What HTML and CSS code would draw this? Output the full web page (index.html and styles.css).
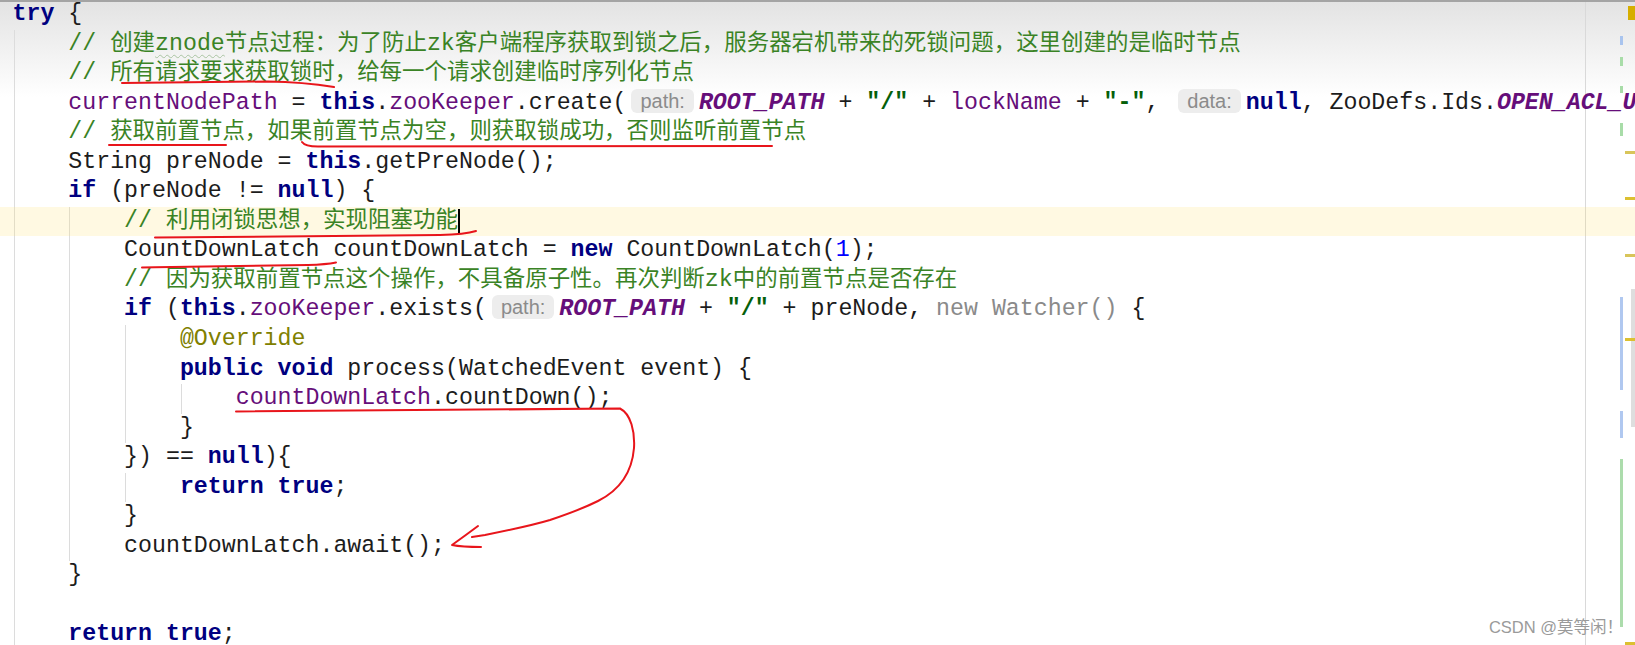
FILE: index.html
```html
<!DOCTYPE html>
<html lang="zh-CN">
<head>
    <meta charset="UTF-8">
    <title>ZkLock.tryLock</title>
    <link rel="stylesheet" href="styles.css">
</head>
<body>

<div class="editor">
    <div class="code">
        <div class="line"><span class="kw">try</span> {</div>
        <div class="block">
            <div class="line"><span class="cm"><span class="lat">// </span>创建<span class="lat typo">znode</span>节点过程：为了防止<span class="lat">zk</span>客户端程序获取到锁之后，服务器宕机带来的死锁问题，这里创建的是临时节点</span></div>
            <div class="line"><span class="cm"><span class="lat">// </span>所有请求要求获取锁时，给每一个请求创建临时序列化节点</span></div>
            <div class="line"><span class="fd">currentNodePath</span> = <span class="kw">this</span>.<span class="fd">zooKeeper</span>.create(<span class="hint">path:</span><span class="cst">ROOT_PATH</span> + <span class="str">"/"</span> + <span class="fd">lockName</span> + <span class="str">"-"</span>, <span class="hint">data:</span><span class="kw">null</span>, ZooDefs.Ids.<span class="cst">OPEN_ACL_UNSAFE</span>, CreateMode.<span class="cst">EPHEMERAL_SEQUENTIAL</span>);</div>
            <div class="line"><span class="cm"><span class="lat">// </span>获取前置节点，如果前置节点为空，则获取锁成功，否则监听前置节点</span></div>
            <div class="line">String preNode = <span class="kw">this</span>.getPreNode();</div>
            <div class="line"><span class="kw">if</span> (preNode != <span class="kw">null</span>) {</div>
            <div class="block">
                <div class="line current"><span class="cm"><span class="lat">// </span>利用闭锁思想，实现阻塞功能</span><span class="caret"></span></div>
                <div class="line">CountDownLatch countDownLatch = <span class="kw">new</span> CountDownLatch(<span class="num">1</span>);</div>
                <div class="line"><span class="cm"><span class="lat">// </span>因为获取前置节点这个操作，不具备原子性。再次判断<span class="lat">zk</span>中的前置节点是否存在</span></div>
                <div class="line"><span class="kw">if</span> (<span class="kw">this</span>.<span class="fd">zooKeeper</span>.exists(<span class="hint">path:</span><span class="cst">ROOT_PATH</span> + <span class="str">"/"</span> + preNode, <span class="dim">new Watcher()</span> {</div>
                <div class="block">
                    <div class="line"><span class="ann">@Override</span></div>
                    <div class="line"><span class="kw">public void</span> process(WatchedEvent event) {</div>
                    <div class="block">
                        <div class="line"><span class="fd">countDownLatch</span>.countDown();</div>
                    </div>
                    <div class="line">}</div>
                </div>
                <div class="line">}) == <span class="kw">null</span>){</div>
                <div class="block">
                    <div class="line"><span class="kw">return true</span>;</div>
                </div>
                <div class="line">}</div>
                <div class="line">countDownLatch.await();</div>
            </div>
            <div class="line">}</div>
            <div class="line"></div>
            <div class="line"><span class="kw">return true</span>;</div>
        </div>
    </div>
    <div class="stripe">
        <svg width="15" height="643" viewBox="0 0 15 643">
            <rect x="8" y="4" width="7" height="14" fill="#d6ae00"/>
            <rect x="0" y="34" width="3" height="9" fill="#a9c4ee"/>
            <rect x="0" y="55" width="3" height="9" fill="#a8dca8"/>
            <rect x="0" y="84" width="3" height="7" fill="#a8dca8"/>
            <rect x="0" y="121" width="3" height="13" fill="#a8dca8"/>
            <rect x="11" y="287" width="4" height="138" fill="#dedede"/>
            <rect x="5" y="149" width="10" height="3" fill="#d8c55a"/>
            <rect x="5" y="195" width="10" height="3" fill="#dcc030"/>
            <rect x="5" y="252" width="10" height="3" fill="#d8c55a"/>
            <rect x="5" y="336" width="10" height="3" fill="#dcc030"/>
            <rect x="5" y="640" width="10" height="3" fill="#dcc030"/>
            <rect x="0" y="295" width="3" height="93" fill="#b0c8f0"/>
            <rect x="0" y="409" width="3" height="27" fill="#b0c8f0"/>
            <rect x="0" y="457" width="3" height="168" fill="#acdcac"/>
        </svg>
    </div>
</div>

<!-- hand-drawn red marks on top of the screenshot -->
<svg class="ink" width="1635" height="645" viewBox="0 0 1635 645">
    <g fill="none" stroke="#e8151b" stroke-width="2" stroke-linecap="round" stroke-linejoin="round">
        <path d="M122 83 L268 81.5 Q303 82 334 87"/>
        <path d="M109 145 L226 145"/>
        <path d="M302 142 Q305 146.5 318 146.5 L772 146"/>
        <path d="M155 237.5 C260 236.5 380 236 440 235 Q465 234.5 476 231"/>
        <path d="M142 267.5 C205 266.5 270 265.5 308 265 Q326 264.5 336 262.5"/>
        <path d="M236 411.5 L620 408.5 C631 414 635 432 634 448 C632 472 620 490 598 501 C580 510 562 516 550 520 C530 526 505 531 485 535 L472 537"/>
        <path d="M478 526 C470 532 459 540 452 545 C462 547 472 547 481 547"/>
    </g>
</svg>

<div class="watermark">CSDN @莫等闲！</div>

</body>
</html>
```

FILE: styles.css
```css
html, body {
    margin: 0;
}
body {
    position: relative;
    width: 1635px;
    height: 645px;
    overflow: hidden;
    background: #fff;
}
.editor {
    display: flex;
    height: 643px;
    border-top: 2px solid #a4a4a4;
    background:
        linear-gradient(to right, transparent 1585px, #d9d9d9 1585px, #d9d9d9 1586px, transparent 1586px),
        linear-gradient(#e3e3e3, #fff 95px);
    overflow: hidden;
}
.code {
    flex: 1;
    min-width: 0;
    margin-top: -2px;
    padding-left: 12.5px;
    font-family: "Liberation Mono", "Noto Sans CJK SC", monospace;
    font-size: 23.25px;
    color: #1c1c1c;
}
.line {
    height: 29.55px;
    line-height: 29.55px;
    white-space: pre;
}
.block {
    margin-left: 1px;
    border-left: 1px solid #dcdcdc;
    padding-left: calc(4ch - 2px);
}
.current {
    background: rgba(255, 226, 110, 0.2);
    box-shadow: -1200px 0 0 rgba(255, 226, 110, 0.2), 1200px 0 0 rgba(255, 226, 110, 0.2);
}
.caret {
    display: inline-block;
    width: 2px;
    height: 24px;
    background: #000;
    vertical-align: middle;
}
.kw {
    color: #000080;
    font-weight: bold;
}
.fd {
    color: #660e7a;
}
.cst {
    color: #660e7a;
    font-weight: bold;
    font-style: italic;
}
.str {
    color: #05600a;
    font-weight: bold;
}
.num {
    color: #0000ff;
}
.ann {
    color: #808000;
}
.dim {
    color: #8a8a8a;
}
.cm {
    color: #3a8325;
    font-size: 22.46px;
}
.cm .lat {
    font-size: 23.25px;
}
.typo {
    text-decoration: underline wavy #a9c4a2;
    text-decoration-thickness: 1px;
    text-underline-offset: 4px;
}
.hint {
    display: inline-block;
    margin: 0 5px;
    padding: 0 9px;
    font-family: "Liberation Sans", Arial, sans-serif;
    font-size: 20px;
    font-weight: normal;
    font-style: normal;
    line-height: 24px;
    color: #8b8b8b;
    background: #ededed;
    border-radius: 6px;
    vertical-align: 1px;
}
.stripe {
    flex: none;
    width: 15px;
}
.stripe svg {
    display: block;
}
.ink {
    position: absolute;
    top: 0;
    left: 0;
    pointer-events: none;
}
.watermark {
    position: absolute;
    right: 12px;
    bottom: 9px;
    font-family: "Liberation Sans", "Noto Sans CJK SC", sans-serif;
    font-size: 16.5px;
    line-height: 18px;
    color: #9a9a9a;
    text-shadow: 0 0 1px #fff;
}
```
